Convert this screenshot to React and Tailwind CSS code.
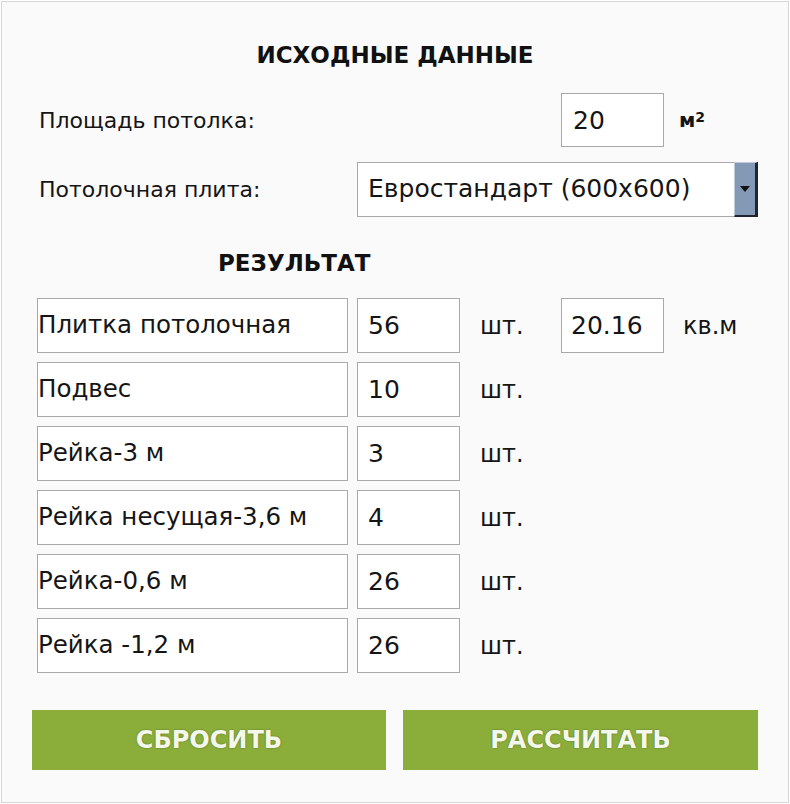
import React, { useState } from "react";

const rows = [
  { label: "Плитка потолочная", value: "56", area: "20.16" },
  { label: "Подвес", value: "10" },
  { label: "Рейка-3 м", value: "3" },
  { label: "Рейка несущая-3,6 м", value: "4" },
  { label: "Рейка-0,6 м", value: "26" },
  { label: "Рейка -1,2 м", value: "26" },
];

const Box = ({ className, children }) => (
  <div
    className={`h-[55px] border border-[#a9a9a9] bg-white flex items-center ${className}`}
  >
    {children}
  </div>
);

export default function App() {
  const [area, setArea] = useState("20");

  return (
    <div className="w-[790px] h-[804px] bg-white p-px font-['DejaVu_Sans',Verdana,sans-serif] text-[#151515]">
      <div className="w-full h-full border border-[#d6d6d6] bg-[#fafafa] pt-[38px]">
        <h2 className="text-center text-[23px] font-bold text-[#111] leading-[30px]">
          ИСХОДНЫЕ ДАННЫЕ
        </h2>

        <div className="flex items-center h-[54px] mt-[23px] pl-[37px]">
          <span className="w-[522px] text-[22px]">Площадь потолка:</span>
          <input
            className="w-[103px] h-[54px] border border-[#a9a9a9] bg-white px-[11px] text-[25px] outline-none"
            value={area}
            onChange={(e) => setArea(e.target.value)}
          />
          <span className="ml-[15px] text-[20px] font-bold">
            м<sup className="text-[14px] font-bold relative -top-[5px]">2</sup>
          </span>
        </div>

        <div className="flex items-center h-[54px] mt-[15px] pl-[37px]">
          <span className="w-[318px] text-[22px]">Потолочная плита:</span>
          <div className="flex w-[401px] h-[55px] border border-[#a9a9a9] bg-white">
            <span className="flex-1 flex items-center pl-[10px] text-[25px] whitespace-nowrap">
              Евростандарт (600x600)
            </span>
            <div className="w-[24px] -my-px -mr-px bg-[#8499b6] border-r-[3px] border-b-[2px] border-[#1e2430] border-t border-t-[#c0cbd9] border-l border-l-[#c0cbd9] flex items-center justify-center">
              <svg width="10" height="6" viewBox="0 0 10 6">
                <path d="M0 0h10L5 6z" fill="#111" />
              </svg>
            </div>
          </div>
        </div>

        <h2 className="mt-[32px] pl-[216px] text-[23px] font-bold text-[#111] leading-[30px]">
          РЕЗУЛЬТАТ
        </h2>

        <div className="mt-[20px] pl-[35px] flex flex-col gap-[9px]">
          {rows.map((r) => (
            <div key={r.label} className="flex items-center">
              <Box className="w-[311px] pl-0 text-[24.5px] whitespace-nowrap">{r.label}</Box>
              <Box className="w-[103px] ml-[9px] pl-[10px] text-[25px]">{r.value}</Box>
              <span className="ml-[20px] w-[81px] text-[24px]">шт.</span>
              {r.area && (
                <>
                  <Box className="w-[103px] pl-[9px] text-[25px]">{r.area}</Box>
                  <span className="ml-[19px] text-[24px]">кв.м</span>
                </>
              )}
            </div>
          ))}
        </div>

        <div className="mt-[37px] pl-[30px] flex gap-[17px]">
          <button className="w-[354px] h-[60px] bg-[#8bae3b] text-[#f4f8ea] text-[24px] font-bold [text-shadow:0_0_2px_rgba(0,0,0,0.4)]">
            СБРОСИТЬ
          </button>
          <button className="w-[355px] h-[60px] bg-[#8bae3b] text-[#f4f8ea] text-[24px] font-bold [text-shadow:0_0_2px_rgba(0,0,0,0.4)]">
            РАССЧИТАТЬ
          </button>
        </div>
      </div>
    </div>
  );
}
